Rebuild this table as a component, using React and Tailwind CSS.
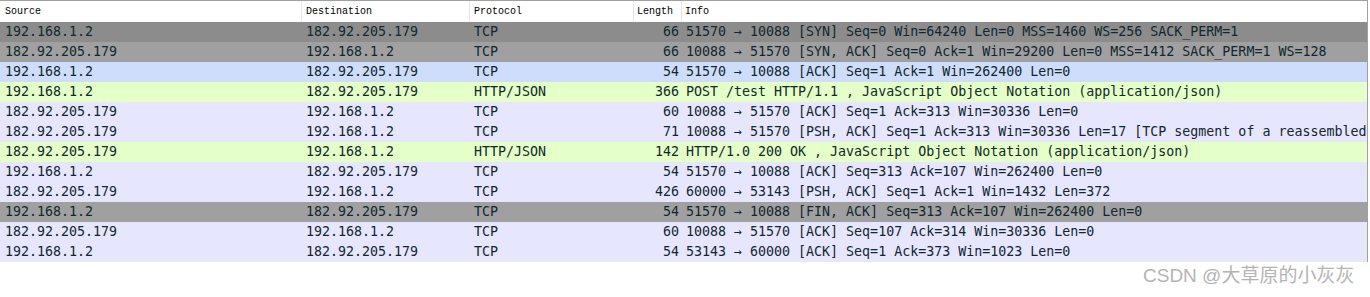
import React from "react";

const rows = [
  ["192.168.1.2", "182.92.205.179", "TCP", "66", "51570 → 10088 [SYN] Seq=0 Win=64240 Len=0 MSS=1460 WS=256 SACK_PERM=1", "bg-[#8c8c8c]"],
  ["182.92.205.179", "192.168.1.2", "TCP", "66", "10088 → 51570 [SYN, ACK] Seq=0 Ack=1 Win=29200 Len=0 MSS=1412 SACK_PERM=1 WS=128", "bg-[#a0a0a0]"],
  ["192.168.1.2", "182.92.205.179", "TCP", "54", "51570 → 10088 [ACK] Seq=1 Ack=1 Win=262400 Len=0", "bg-[#cfddfc]"],
  ["192.168.1.2", "182.92.205.179", "HTTP/JSON", "366", "POST /test HTTP/1.1 , JavaScript Object Notation (application/json)", "bg-[#e4ffc7]"],
  ["182.92.205.179", "192.168.1.2", "TCP", "60", "10088 → 51570 [ACK] Seq=1 Ack=313 Win=30336 Len=0", "bg-[#e7e6ff]"],
  ["182.92.205.179", "192.168.1.2", "TCP", "71", "10088 → 51570 [PSH, ACK] Seq=1 Ack=313 Win=30336 Len=17 [TCP segment of a reassembled", "bg-[#e7e6ff]"],
  ["182.92.205.179", "192.168.1.2", "HTTP/JSON", "142", "HTTP/1.0 200 OK , JavaScript Object Notation (application/json)", "bg-[#e4ffc7]"],
  ["192.168.1.2", "182.92.205.179", "TCP", "54", "51570 → 10088 [ACK] Seq=313 Ack=107 Win=262400 Len=0", "bg-[#e7e6ff]"],
  ["182.92.205.179", "192.168.1.2", "TCP", "426", "60000 → 53143 [PSH, ACK] Seq=1 Ack=1 Win=1432 Len=372", "bg-[#e7e6ff]"],
  ["192.168.1.2", "182.92.205.179", "TCP", "54", "51570 → 10088 [FIN, ACK] Seq=313 Ack=107 Win=262400 Len=0", "bg-[#a0a0a0]"],
  ["182.92.205.179", "192.168.1.2", "TCP", "60", "10088 → 51570 [ACK] Seq=107 Ack=314 Win=30336 Len=0", "bg-[#e7e6ff]"],
  ["192.168.1.2", "182.92.205.179", "TCP", "54", "53143 → 60000 [ACK] Seq=1 Ack=373 Win=1023 Len=0", "bg-[#e7e6ff]"],
];

const mono = { fontFamily: '"DejaVu Sans Mono", "Liberation Mono", monospace' };

export default function App() {
  return (
    <div className="w-[1370px] h-[297px] bg-white overflow-hidden relative">
      <div className="w-[1368px] border-t border-r border-[#a0a0a0]">
        <div
          className="flex h-[21px] items-center text-[10px] text-black bg-white"
          style={{ fontFamily: '"Liberation Mono", monospace' }}
        >
          <div className="w-[302px] shrink-0 pl-[5px] h-full flex items-center border-r border-[#e5e5e5]">Source</div>
          <div className="w-[168px] shrink-0 pl-[4px] h-full flex items-center border-r border-[#e5e5e5]">Destination</div>
          <div className="w-[164px] shrink-0 pl-[4px] h-full flex items-center border-r border-[#e5e5e5]">Protocol</div>
          <div className="w-[48px] shrink-0 pl-[3px] h-full flex items-center border-r border-[#e5e5e5]">Length</div>
          <div className="flex-1 pl-[3px] h-full flex items-center">Info</div>
        </div>
        {rows.map((r, i) => (
          <div
            key={i}
            className={`flex h-[20px] items-center text-[13.3px] text-[#12272e] whitespace-nowrap ${r[5]}`}
            style={mono}
          >
            <div className="w-[302px] shrink-0 pl-[5px]">{r[0]}</div>
            <div className="w-[168px] shrink-0 pl-[4px]">{r[1]}</div>
            <div className="w-[164px] shrink-0 pl-[4px]">{r[2]}</div>
            <div className="w-[48px] shrink-0 pr-[3px] text-right">{r[3]}</div>
            <div className="flex-1 pl-[4px]">{r[4]}</div>
          </div>
        ))}
      </div>
      <div
        className="absolute left-[1143px] top-[262px] text-[19px] text-[#b4b4b4] leading-[28px] whitespace-nowrap"
        style={{ fontFamily: '"Liberation Sans", "Noto Sans CJK SC", sans-serif' }}
      >
        CSDN @大草原的小灰灰
      </div>
    </div>
  );
}
